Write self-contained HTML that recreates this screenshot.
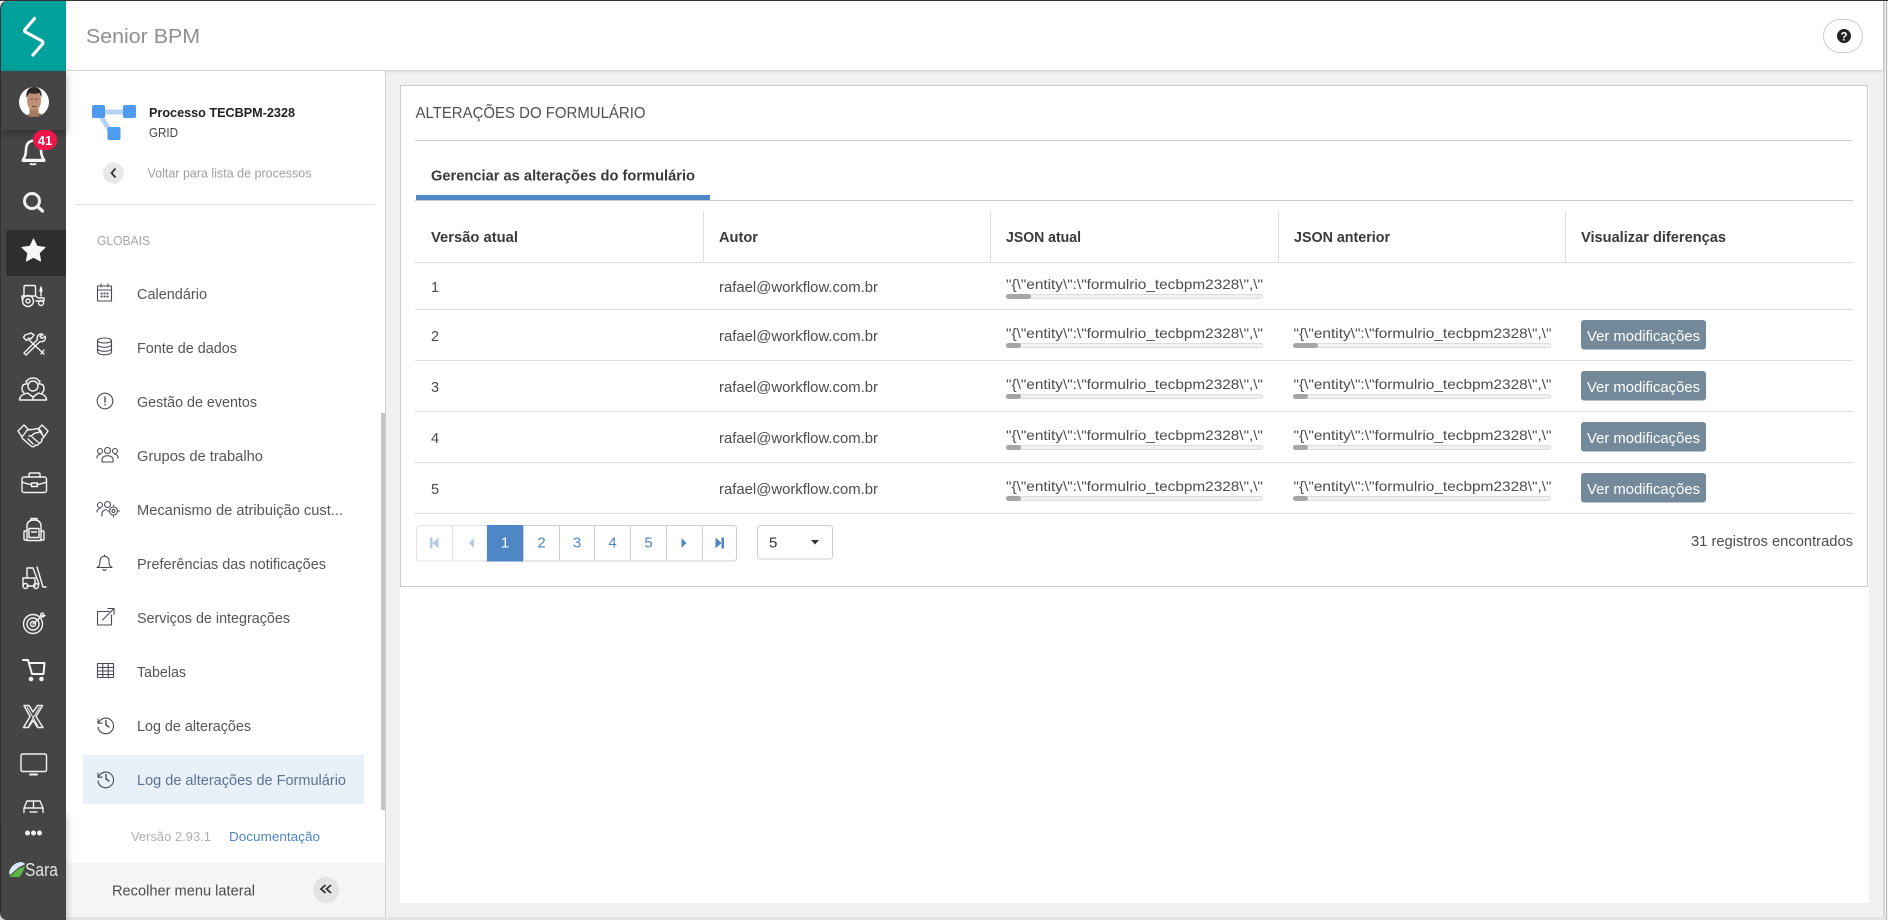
<!DOCTYPE html>
<html lang="pt-BR">
<head>
<meta charset="utf-8">
<title>Senior BPM</title>
<style>
html,body{margin:0;padding:0;width:1888px;height:920px;overflow:hidden;background:#f1f1f1}
svg{display:block}
text{font-family:"Liberation Sans",sans-serif;white-space:pre}
.m{font-size:14.5px;fill:#555}
.b{font-size:14.5px;fill:#4c4c4c}
.h{font-size:14.5px;font-weight:700;fill:#3a3a3a}
.j{font-size:14px;fill:#4c4c4c}
.w{fill:none;stroke:#f4f4f4;stroke-width:1.4;stroke-linecap:round;stroke-linejoin:round}
.i{fill:none;stroke:#4a4a55;stroke-width:1.1;stroke-linecap:round;stroke-linejoin:round}
</style>
</head>
<body>
<svg xmlns="http://www.w3.org/2000/svg" width="1888" height="920" viewBox="0 0 1888 920">
<defs>
<filter id="sd" x="-20%" y="-20%" width="140%" height="140%"><feDropShadow dx="0" dy="3" stdDeviation="4" flood-color="#000" flood-opacity=".3"/></filter>
<filter id="sh" x="-5%" y="-20%" width="110%" height="150%"><feDropShadow dx="0" dy="1" stdDeviation="1.5" flood-color="#000" flood-opacity=".18"/></filter>
<clipPath id="av"><circle cx="34" cy="102" r="15"/></clipPath>
<clipPath id="boxc"><rect x="0" y="795" width="66" height="18"/></clipPath>
<g id="hist" class="i"><path d="M1 2.500v4.200h4.200"/><path d="M1.500 6.500A7.800 7.800 0 1 1 1 10.500"/><path d="M9 4v4.500l3 2" stroke-width="1.400"/></g>
</defs>

<!-- page background -->
<rect width="1888" height="920" fill="#f1f1f1"/>
<rect x="1883" y="0" width="2" height="920" fill="#d9d9d9"/>
<rect x="1885" y="0" width="3" height="920" fill="#f4f4f4"/>
<rect x="1886" y="0" width="1" height="920" fill="#b9b9b9"/>
<rect x="66" y="917" width="1820" height="3" fill="#e3e3e3"/>

<!-- header -->
<rect x="66" y="0" width="1817" height="70" fill="#fff" filter="url(#sh)"/>
<rect x="0" y="0" width="1888" height="1" fill="#333"/>
<text x="86" y="43" font-size="20" fill="#8f8f8f" textLength="114" lengthAdjust="spacingAndGlyphs">Senior BPM</text>
<rect x="1823.5" y="19.5" width="39" height="33" rx="16.5" fill="#fff" stroke="#cfcfcf"/>
<circle cx="1844" cy="36" r="7" fill="#222"/>
<text x="1844" y="40.3" font-size="11.5" font-weight="700" fill="#fff" text-anchor="middle">?</text>

<!-- sidebar -->
<rect x="66" y="71" width="319" height="846" fill="#fff"/>
<rect x="385" y="71" width="1" height="846" fill="#cfcfcf"/>
<rect x="381" y="413" width="4" height="397" rx="1" fill="#c4c4c4"/>
<g fill="#b5d4f5"><rect x="102" y="109.500" width="24" height="5"/><path d="M99 118l5-1 8 12-4 3z"/></g>
<g fill="#4f9bef"><rect x="92" y="105" width="13" height="13" rx="2"/><rect x="123" y="105" width="13" height="13" rx="2"/><rect x="107.500" y="127" width="13" height="13" rx="2"/></g>
<text x="149" y="117" font-size="13" font-weight="700" fill="#222" textLength="146" lengthAdjust="spacingAndGlyphs">Processo TECBPM-2328</text>
<text x="149" y="137" font-size="13" fill="#444" textLength="29" lengthAdjust="spacingAndGlyphs">GRID</text>
<circle cx="113.500" cy="173" r="10.500" fill="#e8e8e8"/>
<path d="M115.500 168.500l-4 4.500 4 4.500" fill="none" stroke="#333" stroke-width="1.800"/>
<text x="147.500" y="177.500" font-size="12.500" fill="#a0a0a0" textLength="164" lengthAdjust="spacingAndGlyphs">Voltar para lista de processos</text>
<rect x="76" y="204" width="299" height="1" fill="#ddd"/>
<text x="97" y="245" font-size="13" fill="#a6a6a6" textLength="53" lengthAdjust="spacingAndGlyphs">GLOBAIS</text>

<text class="m" x="137" y="299" textLength="70" lengthAdjust="spacingAndGlyphs">Calendário</text>
<text class="m" x="137" y="353" textLength="100" lengthAdjust="spacingAndGlyphs">Fonte de dados</text>
<text class="m" x="137" y="407" textLength="120" lengthAdjust="spacingAndGlyphs">Gestão de eventos</text>
<text class="m" x="137" y="461" textLength="126" lengthAdjust="spacingAndGlyphs">Grupos de trabalho</text>
<text class="m" x="137" y="515" textLength="206" lengthAdjust="spacingAndGlyphs">Mecanismo de atribuição cust...</text>
<text class="m" x="137" y="569" textLength="189" lengthAdjust="spacingAndGlyphs">Preferências das notificações</text>
<text class="m" x="137" y="623" textLength="153" lengthAdjust="spacingAndGlyphs">Serviços de integrações</text>
<text class="m" x="137" y="677" textLength="49" lengthAdjust="spacingAndGlyphs">Tabelas</text>
<text class="m" x="137" y="731" textLength="114" lengthAdjust="spacingAndGlyphs">Log de alterações</text>
<rect x="83" y="755" width="281" height="49" fill="#e8f0fa"/>
<text class="m" x="137" y="785" style="fill:#5d7290" textLength="209" lengthAdjust="spacingAndGlyphs">Log de alterações de Formulário</text>

<!-- sidebar icons -->
<g class="i">
<rect x="97.500" y="286" width="14" height="15"/><path d="M97.500 290h14M101 284v3M108 284v3"/>
<path d="M100.500 293.500h2M103.500 293.500h2M106.500 293.500h2M100.500 296.500h2M103.500 296.500h2M106.500 296.500h2" stroke-width="1.800" stroke-linecap="butt"/>
<ellipse cx="104.500" cy="340.500" rx="7" ry="2.500"/><path d="M97.500 340.500v11.500c0 1.500 3 2.800 7 2.800s7-1.300 7-2.800v-11.500M97.500 344.500c0 1.500 3 2.800 7 2.800s7-1.300 7-2.800M97.500 348.500c0 1.500 3 2.800 7 2.800s7-1.300 7-2.800"/>
<circle cx="105" cy="401" r="7.800"/><path d="M105 397v5M105 404.300v.6" stroke-width="1.400"/>
<circle cx="100" cy="451" r="2.500"/><circle cx="107.500" cy="450.500" r="3"/><circle cx="115" cy="451" r="2.500"/><path d="M97 458c0-2 1-3.500 3-3.500M118 458c0-2-1-3.500-3-3.500M102 462v-2.500c0-2 2-3.800 5.500-3.800s5.500 1.800 5.500 3.800v2.500z"/>
<circle cx="100" cy="505" r="2.500"/><circle cx="107.500" cy="504.500" r="3"/><path d="M97 512c0-2 1-3.500 3-3.500M102 516v-2.500c0-2 2-3.800 4.500-3.800"/><circle cx="113.500" cy="511" r="4"/><circle cx="113.500" cy="511" r="1.500"/>
<path d="M113.500 506v-1M113.500 517v-1M118.500 511h1M107.500 511h1"/>
<path d="M104.500 555v1.500M99 566c1-1.500 1-3 1-5 0-3 2-4.800 4.500-4.800s4.500 1.800 4.500 4.800c0 2 0 3.500 1 5l2 1.500h-15z M103 569.500c.5 1.300 2.500 1.300 3 0"/>
<path d="M109 611.500h-11.500v13.500h14v-10M102.500 620l11.500-11.500M108 608.500h6v6"/>
<rect x="97.500" y="663.500" width="16" height="14"/><path d="M97.500 667.500h16M97.500 671h16M97.500 674.500h16M102.800 664v13.500M108.200 664v13.500"/>
</g>
<use href="#hist" x="97" y="716.500"/>
<use href="#hist" x="97" y="770.500"/>

<text x="131" y="841" font-size="13" fill="#b0b0b0" textLength="80" lengthAdjust="spacingAndGlyphs">Versão 2.93.1</text>
<text x="229" y="841" font-size="13" fill="#4f86c6" textLength="91" lengthAdjust="spacingAndGlyphs">Documentação</text>
<rect x="66" y="863" width="319" height="54" fill="#f5f5f5"/>
<rect x="385" y="863" width="1" height="54" fill="#cfcfcf"/>
<text class="b" x="112" y="895.500" textLength="143" lengthAdjust="spacingAndGlyphs">Recolher menu lateral</text>
<circle cx="326" cy="890" r="13" fill="#e4e4e4"/>
<path d="M325.500 885l-4.500 4 4.500 4M331 885l-4.500 4 4.500 4" fill="none" stroke="#333" stroke-width="1.800"/>

<!-- card -->
<rect x="400" y="85" width="1469" height="818" fill="#fff"/>
<rect x="400.500" y="85.500" width="1467" height="501" fill="#fff" stroke="#cbcbcb"/>
<text x="415.500" y="118" font-size="16" fill="#505050" textLength="230" lengthAdjust="spacingAndGlyphs">ALTERAÇÕES DO FORMULÁRIO</text>
<rect x="415" y="140" width="1438" height="1" fill="#ccc"/>
<text x="431" y="180.500" font-size="14.500" font-weight="700" fill="#3a3a3a" textLength="264" lengthAdjust="spacingAndGlyphs">Gerenciar as alterações do formulário</text>
<rect x="415" y="200" width="1438" height="1" fill="#ccc"/>
<rect x="416" y="195" width="294" height="5" fill="#4f86c6"/>

<!-- table head -->
<g fill="#ddd"><rect x="703" y="211" width="1" height="51"/><rect x="990" y="211" width="1" height="51"/><rect x="1278" y="211" width="1" height="51"/><rect x="1565" y="211" width="1" height="51"/></g>
<text class="h" x="431" y="242" textLength="87" lengthAdjust="spacingAndGlyphs">Versão atual</text>
<text class="h" x="719" y="242" textLength="39" lengthAdjust="spacingAndGlyphs">Autor</text>
<text class="h" x="1006" y="242" textLength="75" lengthAdjust="spacingAndGlyphs">JSON atual</text>
<text class="h" x="1294" y="242" textLength="96" lengthAdjust="spacingAndGlyphs">JSON anterior</text>
<text class="h" x="1581" y="242" textLength="145" lengthAdjust="spacingAndGlyphs">Visualizar diferenças</text>
<g fill="#ddd"><rect x="415" y="262" width="1438" height="1"/><rect x="415" y="309" width="1438" height="1"/><rect x="415" y="360" width="1438" height="1"/><rect x="415" y="411" width="1438" height="1"/><rect x="415" y="462" width="1438" height="1"/><rect x="415" y="513" width="1438" height="1"/></g>

<!-- col 1 & 2 -->
<text class="b" x="431" y="292">1</text><text class="b" x="719" y="292" textLength="159" lengthAdjust="spacingAndGlyphs">rafael@workflow.com.br</text>
<text class="b" x="431" y="341">2</text><text class="b" x="719" y="341" textLength="159" lengthAdjust="spacingAndGlyphs">rafael@workflow.com.br</text>
<text class="b" x="431" y="392">3</text><text class="b" x="719" y="392" textLength="159" lengthAdjust="spacingAndGlyphs">rafael@workflow.com.br</text>
<text class="b" x="431" y="443">4</text><text class="b" x="719" y="443" textLength="159" lengthAdjust="spacingAndGlyphs">rafael@workflow.com.br</text>
<text class="b" x="431" y="494">5</text><text class="b" x="719" y="494" textLength="159" lengthAdjust="spacingAndGlyphs">rafael@workflow.com.br</text>

<!-- JSON columns -->
<g>
<text class="j" x="1006" y="289" textLength="257" lengthAdjust="spacingAndGlyphs">"{\"entity\":\"formulrio_tecbpm2328\",\"</text>
<text class="j" x="1006" y="338" textLength="257" lengthAdjust="spacingAndGlyphs">"{\"entity\":\"formulrio_tecbpm2328\",\"</text>
<text class="j" x="1006" y="389" textLength="257" lengthAdjust="spacingAndGlyphs">"{\"entity\":\"formulrio_tecbpm2328\",\"</text>
<text class="j" x="1006" y="440" textLength="257" lengthAdjust="spacingAndGlyphs">"{\"entity\":\"formulrio_tecbpm2328\",\"</text>
<text class="j" x="1006" y="491" textLength="257" lengthAdjust="spacingAndGlyphs">"{\"entity\":\"formulrio_tecbpm2328\",\"</text>
<text class="j" x="1293.500" y="338" textLength="258" lengthAdjust="spacingAndGlyphs">"{\"entity\":\"formulrio_tecbpm2328\",\"</text>
<text class="j" x="1293.500" y="389" textLength="258" lengthAdjust="spacingAndGlyphs">"{\"entity\":\"formulrio_tecbpm2328\",\"</text>
<text class="j" x="1293.500" y="440" textLength="258" lengthAdjust="spacingAndGlyphs">"{\"entity\":\"formulrio_tecbpm2328\",\"</text>
<text class="j" x="1293.500" y="491" textLength="258" lengthAdjust="spacingAndGlyphs">"{\"entity\":\"formulrio_tecbpm2328\",\"</text>
</g>
<!-- scroll tracks -->
<g fill="#f1f1f1" stroke="#dcdcdc" stroke-width="1">
<rect x="1006.500" y="294.500" width="256" height="4" rx="2"/><rect x="1006.500" y="343.500" width="256" height="4" rx="2"/><rect x="1006.500" y="394.500" width="256" height="4" rx="2"/><rect x="1006.500" y="445.500" width="256" height="4" rx="2"/><rect x="1006.500" y="496.500" width="256" height="4" rx="2"/>
<rect x="1293.500" y="343.500" width="257" height="4" rx="2"/><rect x="1293.500" y="394.500" width="257" height="4" rx="2"/><rect x="1293.500" y="445.500" width="257" height="4" rx="2"/><rect x="1293.500" y="496.500" width="257" height="4" rx="2"/>
</g>
<g fill="#a6a6a6">
<rect x="1006" y="294" width="25" height="5" rx="2.500"/><rect x="1006" y="343" width="15" height="5" rx="2.500"/><rect x="1006" y="394" width="15" height="5" rx="2.500"/><rect x="1006" y="445" width="15" height="5" rx="2.500"/><rect x="1006" y="496" width="15" height="5" rx="2.500"/>
<rect x="1293" y="343" width="25" height="5" rx="2.500"/><rect x="1293" y="394" width="15" height="5" rx="2.500"/><rect x="1293" y="445" width="15" height="5" rx="2.500"/><rect x="1293" y="496" width="15" height="5" rx="2.500"/>
</g>

<!-- buttons -->
<g fill="#748a9b">
<rect x="1581" y="320" width="125" height="29.500" rx="3"/><rect x="1581" y="371" width="125" height="29.500" rx="3"/><rect x="1581" y="422" width="125" height="29.500" rx="3"/><rect x="1581" y="473" width="125" height="29.500" rx="3"/>
</g>
<g font-size="14.500" fill="#fff">
<text x="1587" y="341" textLength="113" lengthAdjust="spacingAndGlyphs">Ver modificações</text>
<text x="1587" y="392" textLength="113" lengthAdjust="spacingAndGlyphs">Ver modificações</text>
<text x="1587" y="443" textLength="113" lengthAdjust="spacingAndGlyphs">Ver modificações</text>
<text x="1587" y="494" textLength="113" lengthAdjust="spacingAndGlyphs">Ver modificações</text>
</g>

<!-- pagination -->
<rect x="416.500" y="525.500" width="320" height="35.500" rx="3" fill="#fff" stroke="#cfcfcf"/>
<rect x="416.500" y="525.500" width="70.500" height="35.500" rx="3" fill="#fff" stroke="#e4e4e4"/>
<rect x="487" y="525" width="36" height="36.500" fill="#4f86c6"/>
<g fill="#e4e4e4"><rect x="452" y="526" width="1" height="35"/></g>
<g fill="#cfcfcf"><rect x="523" y="526" width="1" height="35"/><rect x="559" y="526" width="1" height="35"/><rect x="594" y="526" width="1" height="35"/><rect x="630" y="526" width="1" height="35"/><rect x="666" y="526" width="1" height="35"/><rect x="702" y="526" width="1" height="35"/></g>
<g fill="#b3cbe6"><rect x="430" y="537.500" width="2.500" height="11"/><path d="M438.500 537.500v11l-6-5.500zM474 538v10l-5-5z"/></g>
<text x="505" y="547.500" font-size="15" fill="#fff" text-anchor="middle">1</text>
<g font-size="15" fill="#4f86c6" text-anchor="middle">
<text x="541.500" y="547.500">2</text><text x="577" y="547.500">3</text><text x="612.500" y="547.500">4</text><text x="648.500" y="547.500">5</text>
</g>
<g fill="#4f86c6"><path d="M681.500 538v10l5-5zM715.500 537.500v11l6-5.500z"/><rect x="721.500" y="537.500" width="2.500" height="11"/></g>

<rect x="757.500" y="525.500" width="75" height="33.500" rx="3" fill="#fff" stroke="#cfcfcf"/>
<text x="769" y="547.500" font-size="15" fill="#333">5</text>
<path d="M811 540h8l-4 4.500z" fill="#333"/>
<text class="b" x="1691" y="546" textLength="162" lengthAdjust="spacingAndGlyphs">31 registros encontrados</text>

<!-- left rail -->
<path d="M0 9Q0 1 8 1H66V920H8Q0 920 0 912Z" fill="#454545"/>
<rect x="0" y="9" width="1" height="903" fill="#333"/>
<path d="M1 71V10Q1 1 10 1H66V71Z" fill="#00a19a"/>
<path d="M34.500 18.500L25 29.500Q24 31 25.500 32L42 41Q43.500 42.500 42.500 44L33 55" fill="none" stroke="#fff" stroke-width="3.200" stroke-linecap="round" stroke-linejoin="round"/>

<!-- avatar block -->
<rect x="1" y="71" width="65" height="59" fill="#454545" filter="url(#sd)"/>
<circle cx="34" cy="102" r="15" fill="#fff"/>
<g clip-path="url(#av)">
<path d="M23 119c1-4 6-5 11-6s10 2 12 6v2H23z" fill="#8a6a55"/>
<rect x="29.500" y="105" width="9" height="11" fill="#a97a60"/>
<ellipse cx="34" cy="100.500" rx="7" ry="10" fill="#bd8f74"/>
<path d="M26.500 98c-1-7 2.500-11 7.500-11s8.500 4 7.500 11c-1-3-2-5-3-5-3 1-6 1-9 0-1 1-2 3-3 5z" fill="#2f2a26"/>
<path d="M30.500 99h2.500M35 99h2.500M32 106.500h4" stroke="#6b4a3c" stroke-width="1"/>
</g>

<!-- bell + badge -->
<g>
<path d="M34 140.500c-6 .5-8 4.500-8 9.500 0 4-1 7-3 10h21c-2-3-3-6-3-10 0-2-.3-3.500-1-5" fill="#454545" stroke="#f4f4f4" stroke-width="2.600" stroke-linejoin="round"/>
<path d="M23 160.500h21" stroke="#f4f4f4" stroke-width="3" stroke-linecap="round"/>
<path d="M30 163.500c1 1.200 5 1.200 6 0" stroke="#f4f4f4" stroke-width="1.800" fill="none"/>
<rect x="33" y="130" width="24" height="20" rx="10" fill="#f0154b"/>
<text x="45" y="145" font-size="13" font-weight="700" fill="#fff" text-anchor="middle">41</text>
</g>
<!-- search -->
<circle cx="32" cy="201" r="7.500" fill="none" stroke="#f0f0f0" stroke-width="3"/>
<path d="M37.500 206.500l5 4.500" stroke="#f0f0f0" stroke-width="3.200" stroke-linecap="round"/>
<!-- star -->
<path d="M6 234q0-4 4-4H66V276H10q-4 0-4-4Z" fill="#2e2e2e"/>
<path d="M33.500 239l3.500 7.300 8 1.100-5.800 5.600 1.400 8-7.100-3.800-7.100 3.800 1.400-8-5.800-5.600 8-1.100z" fill="#f6f6f6" stroke="#f6f6f6" stroke-linejoin="round"/>

<!-- tractor -->
<g class="w">
<path d="M24 296v-9q0-1.500 2-1.500h8q1.500 0 1.500 2V296"/><path d="M22 299v-3h14l2 2h6v3h-8"/>
<circle cx="28" cy="301" r="5.500"/><circle cx="28" cy="301" r="2"/><circle cx="41" cy="303" r="2.500"/>
<path d="M41 296v-5M40 291h2l-1-4z"/>
</g>
<!-- tools -->
<g class="w">
<path d="M25 335l6-2 3 2-3 4-2-1-2.500 2.500-3-3z"/><path d="M29 340l15 14M44 350l-3 4"/>
<path d="M43 334.500c-3-1.500-7 1-5.500 5L24 353l2 2 14-13.500c4 1 6.500-2.500 5-5.500l-3 2.500-2-2z"/>
</g>
<!-- team -->
<g class="w">
<circle cx="33" cy="386" r="5"/><path d="M26 384c-3 0-4 2-4 5 0 2 1 3 2 4M40 384c3 0 4 2 4 5 0 2-1 3-2 4"/>
<path d="M27 381c1-2 3-3 6-3s5 1 6 3M26 381l1 3M40 381l-1 3"/>
<path d="M19.500 400c0-3 2-5 5-6l3-1 5.500 4 5.500-4 3 1c3 1 5 3 5 6z"/><path d="M33 397v3"/>
</g>
<!-- handshake -->
<g class="w">
<path d="M18 431l6-6 4 4-6 8z"/><path d="M48 431l-6-6-4 4 6 8z"/>
<path d="M28 430c3-1 5 0 7-1 3-1 4 0 6 2l-2.500 1.500c-3 0-5 1-6.500 3l-3 .5M41 431l1.500 4"/>
<path d="M22 438l9 8c2 1.500 4 .5 4-1 2 1 4-.5 4-2 2 0 3.500-2 2.500-3.500l2-2"/><path d="M28 439l5 5M32 437l6 5"/>
</g>
<!-- briefcase -->
<g class="w">
<rect x="22" y="477" width="24.500" height="15.500" rx="2"/><path d="M29 477v-2.500q0-1.500 1.500-1.500h8q1.500 0 1.500 1.500v2.500"/>
<path d="M22 482c5 2 9 2.500 9.500 2.500M46.500 482c-5 2-9 2.500-9.500 2.500"/><rect x="31.500" y="483" width="6" height="3.500"/>
</g>
<!-- backpack -->
<g class="w">
<path d="M27 540.500v-14q0-6.500 7-6.500t7 6.500v14z"/><rect x="29" y="528.500" width="10" height="9"/><path d="M31.500 532h5M27 531h-2q-1 0-1 1v7q0 1 1 1h2M41 531h2q1 0 1 1v7q0 1-1 1h-2M31 520v-1.500h6v1.500"/>
</g>
<!-- forklift -->
<g class="w">
<path d="M27 578v-10h6l6 16M37 567l6 20h3"/><path d="M23 586v-8h12v8h-8"/>
<circle cx="25.500" cy="586" r="2.500"/><circle cx="36" cy="586" r="2.500"/>
</g>
<!-- target -->
<g class="w">
<circle cx="33" cy="624" r="9.500"/><circle cx="33" cy="624" r="6"/><circle cx="33" cy="624" r="2.500"/>
<path d="M33 624l10-9M40.500 615.500l.5-2 2-.5.500 2 1.500.500-2 1.500z"/>
</g>
<!-- cart -->
<g fill="none" stroke="#f4f4f4" stroke-width="2" stroke-linejoin="round" stroke-linecap="round">
<path d="M23 660h5l4 14h11.500l1-11H29.500"/>
</g>
<circle cx="31" cy="679" r="2.300" fill="#f4f4f4"/><circle cx="41.500" cy="679" r="2.300" fill="#f4f4f4"/>
<!-- X -->
<g fill="none" stroke="#f0f0f0" stroke-width="1.500" stroke-linejoin="round">
<path d="M24 705.500h5l4 6.500 4.500-6.500h5L36 716.500 43 727.500h-5.500L33 720.500l-4.500 7H23.500L30 716.500z"/>
</g>
<path d="M27 707l11 19M39.500 707l-11 19" stroke="#f0f0f0" stroke-width="1" fill="none"/>
<!-- monitor -->
<g class="w">
<rect x="21" y="754" width="25.500" height="17.500" rx="1.500"/><path d="M30 774.500h7" stroke-width="2"/>
</g>
<!-- box -->
<g class="w" clip-path="url(#boxc)">
<path d="M24 808v10h19v-10l-3-7H27zM24 808h19M33.500 801v7M30 812h7"/>
</g>

<!-- rail bottom -->
<path d="M1 813H66V920H8Q1 920 1 912Z" fill="#454545" filter="url(#sd)"/>
<g fill="#f0f0f0"><circle cx="27.500" cy="833" r="2.500"/><circle cx="33.500" cy="833" r="2.500"/><circle cx="39.500" cy="833" r="2.500"/></g>
<path d="M9 873c1-6 6-11 13-11l3.500 2-7 3.500-8.500 7.500z" fill="#d6e7f2"/>
<path d="M9.500 877l8.500-8 7-3c-1 4-3 8-5.500 11z" fill="#58b546"/>
<text x="25" y="876" font-size="18" fill="#e4e4e4" textLength="33" lengthAdjust="spacingAndGlyphs">Sara</text>
</svg>
</body>
</html>
